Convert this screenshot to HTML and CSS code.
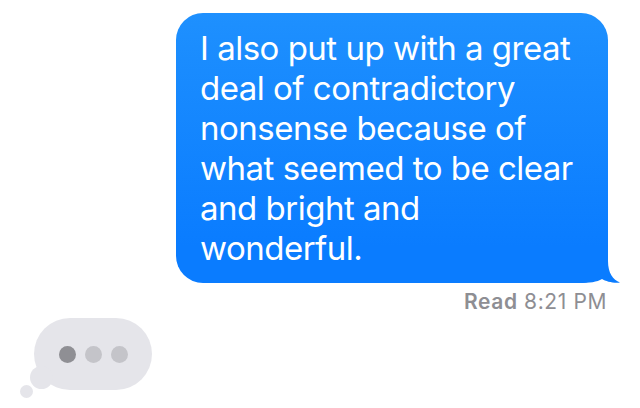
FILE: index.html
```html
<!DOCTYPE html>
<html lang="en">
<head>
<meta charset="utf-8">
<title>Messages</title>
<link rel="stylesheet" href="styles.css">
</head>
<body>
<main class="thread">
  <div class="outgoing">
    <div class="bubble">
      <p class="text">I also put up with a great<br>deal of contradictory<br>nonsense because of<br>what seemed to be clear<br>and bright and<br>wonderful.</p>
      <svg class="tail" width="42" height="34" viewBox="0 0 42 34" aria-hidden="true">
        <path d="M30 0 L30 12 C30 24 35 31 42 33.5 C36 34.5 28 32.5 24 30 C19 33 12 34 0 34 L0 0 Z" fill="#0a7cff"/>
      </svg>
    </div>
    <div class="receipt"><b>Read</b> 8:21 PM</div>
  </div>
  <div class="incoming">
    <div class="typing">
      <span class="dot dark"></span>
      <span class="dot"></span>
      <span class="dot"></span>
      <span class="puff big"></span>
      <span class="puff small"></span>
    </div>
  </div>
</main>
</body>
</html>
```
FILE: styles.css
```css
html, body {
  margin: 0;
  padding: 0;
  background: #ffffff;
}
body {
  width: 640px;
  height: 408px;
  overflow: hidden;
  font-family: Inter, "Noto Sans", "Liberation Sans", sans-serif;
}
.thread {
  display: flex;
  flex-direction: column;
}
.outgoing {
  align-self: flex-end;
  margin-top: 13px;
  margin-right: 32px;
  display: flex;
  flex-direction: column;
  align-items: flex-end;
}
.bubble {
  position: relative;
  width: 432px;
  box-sizing: border-box;
  padding: 15px 20px 15px 24px;
  border-radius: 27px;
  background: linear-gradient(180deg, #1e90fe 0px, #0a7cff calc(100% - 36px), #0a7cff 100%);
}
.text {
  margin: 0;
  color: #ffffff;
  font-size: 33px;
  line-height: 40px;
  letter-spacing: -0.5px;
  white-space: nowrap;
}
.tail {
  position: absolute;
  right: -12px;
  bottom: 0;
  display: block;
}
.receipt {
  margin-top: 7px;
  margin-right: 1px;
  font-size: 21px;
  line-height: 24px;
  letter-spacing: 0.6px;
  color: #8e8e93;
}
.receipt b {
  font-weight: 600;
}
.incoming {
  margin-top: 4px;
  margin-left: 34px;
}
.typing {
  position: relative;
  width: 118px;
  height: 72px;
  border-radius: 36px;
  background: #e5e5ea;
  display: flex;
  align-items: center;
  justify-content: center;
  gap: 9px;
}
.dot {
  width: 17px;
  height: 17px;
  border-radius: 50%;
  background: #c4c4c9;
}
.dot.dark {
  background: #8f8f94;
}
.puff {
  position: absolute;
  border-radius: 50%;
  background: #e5e5ea;
}
.puff.big {
  left: -4px;
  top: 48px;
  width: 23px;
  height: 23px;
}
.puff.small {
  left: -14px;
  top: 67px;
  width: 13px;
  height: 13px;
}
```
